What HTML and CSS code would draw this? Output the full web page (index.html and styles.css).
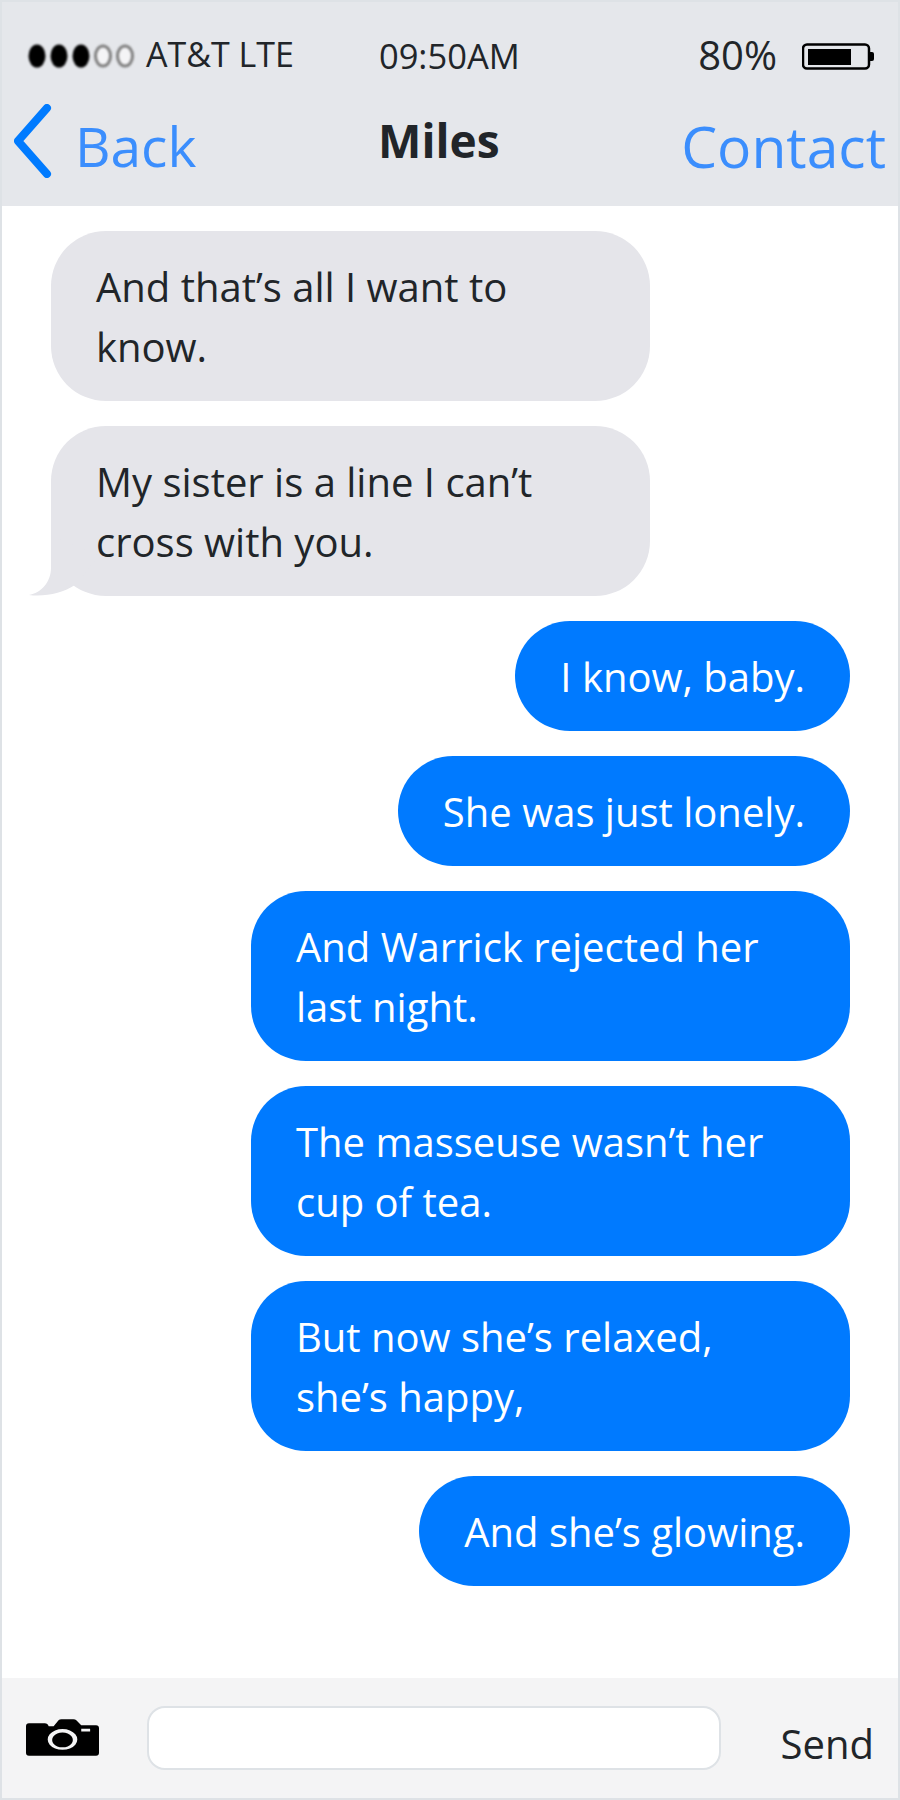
FILE: index.html
```html
<!DOCTYPE html>
<html lang="en">
<head>
  <meta charset="UTF-8">
  <meta name="viewport" content="width=device-width, initial-scale=1.0">
  <title>Messages</title>
  <link rel="stylesheet" href="styles.css">
</head>
<body>
  <div class="phone">
    <header class="top">
      <div class="status">
        <div class="carrier">
          <svg class="dots" width="108" height="24" viewBox="0 0 108 24">
            <ellipse cx="9" cy="12" rx="8.500" ry="11.500"/>
            <ellipse cx="31" cy="12" rx="8.500" ry="11.500"/>
            <ellipse cx="53" cy="12" rx="8.500" ry="11.500"/>
            <ellipse class="off" cx="75" cy="12" rx="7.500" ry="10"/>
            <ellipse class="off" cx="97" cy="12" rx="7.500" ry="10"/>
          </svg>
          <span>AT&amp;T LTE</span>
        </div>
        <div class="clock">09:50AM</div>
        <div class="power">
          <span>80%</span>
          <svg width="72" height="28" viewBox="0 0 72 28">
            <rect x="1" y="1.500" width="66" height="24" rx="4" fill="none" stroke="#000" stroke-width="2.500"/>
            <rect x="6" y="6" width="43" height="16"/>
            <path d="M68 9h2a2 2 0 0 1 2 2v5a2 2 0 0 1-2 2h-2z"/>
          </svg>
        </div>
      </div>
      <nav class="nav">
        <a class="back">
          <svg class="chevron" width="40" height="74" viewBox="0 0 40 74">
            <path d="M33 4 4 37l29 33" fill="none" stroke="#007bff" stroke-width="8" stroke-linecap="round" stroke-linejoin="round"/>
          </svg>
          <span>Back</span>
        </a>
        <h1>Miles</h1>
        <a class="contact">Contact</a>
      </nav>
    </header>

    <main class="chat">
      <div class="bubble them">And that’s all I want to know.</div>
      <div class="bubble them tail">My sister is a line I can’t cross with you.</div>
      <div class="bubble me">I know, baby.</div>
      <div class="bubble me">She was just lonely.</div>
      <div class="bubble me wide">And Warrick rejected her last night.</div>
      <div class="bubble me wide">The masseuse wasn’t her cup of tea.</div>
      <div class="bubble me wide">But now she’s relaxed, she’s happy,</div>
      <div class="bubble me">And she’s glowing.</div>
    </main>

    <footer class="composer">
      <svg class="camera" width="73" height="38" viewBox="0 0 74 38">
        <path fill-rule="evenodd" d="M3 4h16q3 0 4 3h5l5-6q1-1 3-1h12q2 0 3 1l5 5h15q3 0 3 3v25q0 3-3 3H3q-3 0-3-3V7q0-3 3-3zM37 10a15 10.500 0 1 0 .01 0zM37 13.500a10.500 7.500 0 1 1-.01 0zM56 9.500v3h9v-3z"/>
      </svg>
      <input class="field" type="text">
      <span class="send">Send</span>
    </footer>
  </div>
</body>
</html>
```

FILE: styles.css
```css
* {
  box-sizing: border-box;
}

body {
  margin: 0;
  font-family: 'Open Sans', sans-serif;
  color: #212529;
}

.phone {
  display: flex;
  flex-direction: column;
  height: 1800px;
  border: 2px solid #dee2e6;
}

.top {
  height: 204px;
  background: #e5e7eb;
}

.status {
  display: flex;
  height: 104px;
  padding: 30px 24px 0 26px;
}

.carrier {
  display: flex;
  align-items: flex-start;
  gap: 10px;
  font-size: 34px;
  line-height: 44px;
}

.dots {
  margin-top: 12px;
  fill: #000;
  filter: blur(0.8px);
}

.dots .off {
  fill: #f4f4f6;
  stroke: #808080;
  stroke-width: 3;
}

.clock {
  margin-left: 85px;
  font-size: 34.500px;
  line-height: 48px;
}

.power {
  display: flex;
  align-items: flex-start;
  gap: 25px;
  margin-left: auto;
  font-size: 40px;
  line-height: 46px;
}

.power svg {
  margin-top: 11px;
}

.nav {
  display: flex;
  justify-content: space-between;
  align-items: flex-start;
  padding: 0 12px;
}

.nav a {
  color: #3b8efd;
  font-size: 57px;
  line-height: 80px;
}

.nav a.back {
  display: flex;
  gap: 21px;
  font-size: 55px;
}

.chevron {
  margin-top: -2px;
}

.nav h1 {
  margin: 0;
  font-size: 46px;
  font-weight: 700;
  line-height: 68px;
}

.chat {
  flex: 1;
  display: flex;
  flex-direction: column;
  gap: 25px;
  padding: 25px 48px 0 49px;
  background: #fff;
}

.bubble {
  max-width: 599px;
  padding: 26px 45px 24px;
  border-radius: 55px;
  font-size: 40px;
  line-height: 60px;
}

.them {
  align-self: flex-start;
  width: 599px;
  background: #e5e5ea;
}

.tail {
  position: relative;
}

.tail::before {
  content: "";
  position: absolute;
  left: -22px;
  bottom: 0;
  width: 70px;
  height: 60px;
  background: #e5e5ea;
  clip-path: path("M22 0 L22 32 C22 46 12 57 0 59 C16 61 34 57 46 49 L70 20 Z");
}

.me {
  align-self: flex-end;
  background: #007aff;
  color: #fff;
}

.wide {
  width: 599px;
}

.composer {
  display: flex;
  align-items: center;
  height: 120px;
  padding: 0 24px 0 24px;
  background: #f4f4f5;
}

.camera {
  flex: none;
  margin-right: 48px;
}

.field {
  width: 574px;
  height: 64px;
  background: #fff;
  border: 2px solid #dee2e6;
  border-radius: 18px;
}

.send {
  margin-left: auto;
  margin-top: 10px;
  font-size: 40px;
}
```
